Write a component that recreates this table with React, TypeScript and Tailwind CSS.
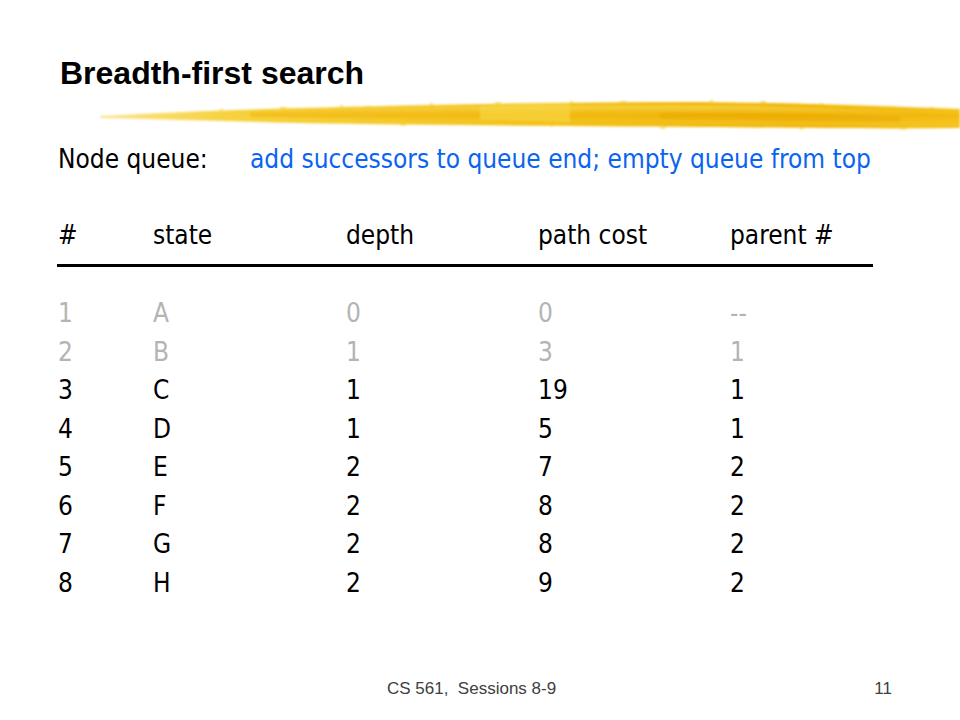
import React from "react";

const rows = [
  { n: "1", s: "A", d: "0", c: "0", p: "--", done: true },
  { n: "2", s: "B", d: "1", c: "3", p: "1", done: true },
  { n: "3", s: "C", d: "1", c: "19", p: "1", done: false },
  { n: "4", s: "D", d: "1", c: "5", p: "1", done: false },
  { n: "5", s: "E", d: "2", c: "7", p: "2", done: false },
  { n: "6", s: "F", d: "2", c: "8", p: "2", done: false },
  { n: "7", s: "G", d: "2", c: "8", p: "2", done: false },
  { n: "8", s: "H", d: "2", c: "9", p: "2", done: false },
];

// little paint flecks along the stroke edges
const flecks = [
  [120, 12], [180, 10], [240, 8], [265, 9], [330, 6], [395, 5], [470, 4], [520, 4],
  [610, 3], [660, 4], [720, 6], [780, 9], [830, 10], [300, 27], [450, 28], [560, 30],
  [700, 31], [800, 31],
];

const Brush = () => (
  <svg width="860" height="36" viewBox="0 0 860 36" className="block">
    <defs>
      <linearGradient id="bg1" x1="0" y1="0" x2="1" y2="0">
        <stop offset="0" stopColor="#fbe38a" />
        <stop offset="0.15" stopColor="#f7d23e" />
        <stop offset="0.5" stopColor="#f3c21a" />
        <stop offset="0.8" stopColor="#f0b80c" />
        <stop offset="1" stopColor="#f5c21a" />
      </linearGradient>
      <linearGradient id="bg2" x1="0" y1="0" x2="0" y2="1">
        <stop offset="0" stopColor="#f9dc5c" stopOpacity="0.7" />
        <stop offset="0.5" stopColor="#efae00" stopOpacity="0.5" />
        <stop offset="1" stopColor="#f6cf3a" stopOpacity="0.3" />
      </linearGradient>
      <filter id="soft">
        <feGaussianBlur stdDeviation="0.8" />
      </filter>
    </defs>
    <g filter="url(#soft)">
      <path
        d="M0 19 C60 16 120 13 200 11 C320 8 450 5 600 5 C700 6 780 9 860 12 L860 31 C780 32 700 31 600 30 C450 29 320 28 200 26 C120 24 60 22 0 21 Z"
        fill="url(#bg1)"
      />
      <path
        d="M150 15 C300 10 480 8 640 9 C740 11 810 15 860 17 L860 28 C760 28 640 27 500 25 C360 23 250 22 150 20 Z"
        fill="url(#bg2)"
      />
      <path d="M380 9 C420 7 440 6 470 7 L470 25 C440 24 410 23 380 23 Z" fill="#f9d84a" opacity="0.6" />
      <path d="M560 15 C640 15 720 16 800 20 L800 25 C720 24 640 23 560 22 Z" fill="#eba800" opacity="0.5" />
      {flecks.map(([x, y], i) => (
        <rect key={i} x={x} y={y} width={i % 2 ? 6 : 3} height="1.5" fill="#f5cb2e" opacity="0.7" />
      ))}
    </g>
  </svg>
);

const Row = ({ cells, className }: { cells: string[]; className: string }) => (
  <div className={`flex h-[38.5px] items-center ${className}`}>
    <div className="w-[95px]">{cells[0]}</div>
    <div className="w-[193px]">{cells[1]}</div>
    <div className="w-[192px]">{cells[2]}</div>
    <div className="w-[192px]">{cells[3]}</div>
    <div>{cells[4]}</div>
  </div>
);

export default function App() {
  return (
    <div className="w-[960px] h-[720px] bg-white relative overflow-hidden flex flex-col">
      <div
        className="pl-[60px] pt-[54px] text-[32px] font-bold leading-[38px] text-black"
        style={{ fontFamily: '"Liberation Sans", Arial, sans-serif' }}
      >
        Breadth-first search
      </div>
      <div className="pl-[100px] mt-[5px] h-[35px]">
        <Brush />
      </div>
      <div
        className="pl-[58px] text-[26px] text-black font-stretch-condensed"
        style={{ fontFamily: '"DejaVu Sans", sans-serif' }}
      >
        <div className="flex h-[38px] items-center mt-[8px]">
          <span className="w-[192px]">Node queue:</span>
          <span className="text-[#0a64f0]">add successors to queue end; empty queue from top</span>
        </div>
        <div className="mt-[38px]">
          <Row cells={["#", "state", "depth", "path cost", "parent #"]} className="" />
        </div>
        <div className="w-[816px] h-[3px] bg-black -ml-[1px] mt-[9px]" />
        <div className="mt-[28px]">
          {rows.map((r) => (
            <Row
              key={r.n}
              cells={[r.n, r.s, r.d, r.c, r.p]}
              className={r.done ? "text-[#b4b4b4]" : "text-black"}
            />
          ))}
        </div>
      </div>
      <div
        className="absolute left-0 right-0 top-[676px] flex text-[17px] text-[#404040]"
        style={{ fontFamily: '"Liberation Sans", Arial, sans-serif' }}
      >
        <span className="ml-[387px]">CS 561,&nbsp; Sessions 8-9</span>
        <span className="ml-auto mr-[68px]">11</span>
      </div>
    </div>
  );
}
